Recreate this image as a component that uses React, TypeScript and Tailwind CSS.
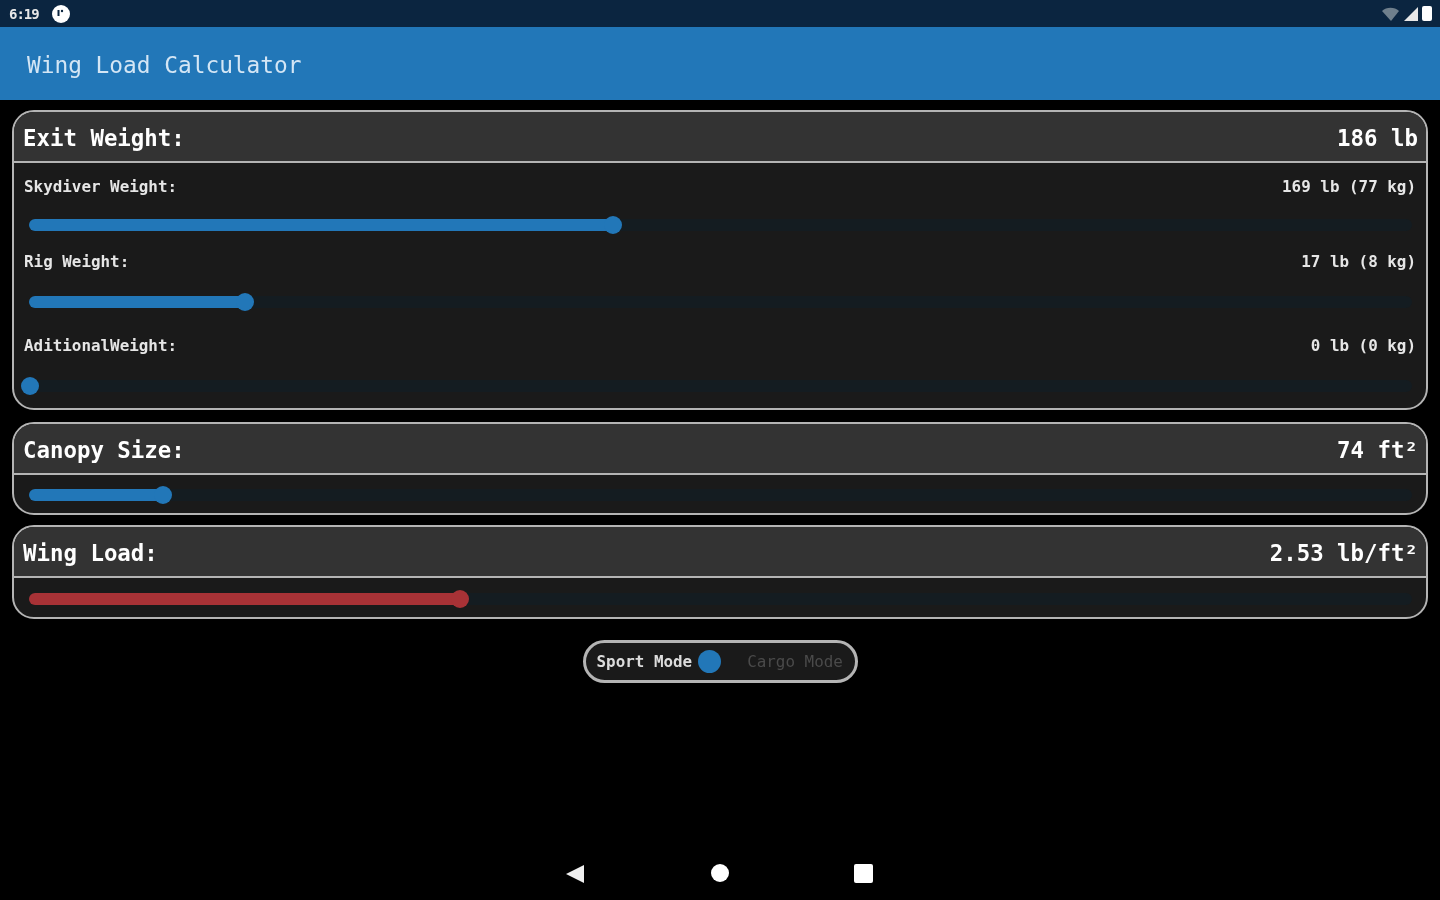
const mono = "font-['DejaVu_Sans_Mono',monospace]";

function Slider({ fill, thumb, color, className }: { fill: string; thumb: string; color: string; className: string }) {
  return (
    <div className={`relative ml-[15px] mr-[14px] h-[12px] rounded-full bg-[#141c21] ${className}`}>
      <div className={`h-full rounded-full ${fill} ${color}`} />
      <div className={`absolute top-[-3px] h-[18px] w-[18px] rounded-full ${thumb} ${color}`} />
    </div>
  );
}

function CardHeader({ title, value }: { title: string; value: string }) {
  return (
    <div className="flex h-[51px] items-center justify-between border-b-2 border-[#b4b4b4] bg-[#333333] pl-[9px] pr-[8px] pt-[4px] text-[22.4px] font-bold text-white">
      <span>{title}</span>
      <span>{value}</span>
    </div>
  );
}

function Row({ label, value, className }: { label: string; value: string; className: string }) {
  return (
    <div className={`flex items-center justify-between px-[10px] text-[15.9px] font-bold leading-[20px] text-[#e6e6e6] ${className}`}>
      <span>{label}</span>
      <span>{value}</span>
    </div>
  );
}

function Card({ children, className }: { children: React.ReactNode; className: string }) {
  return (
    <section className={`overflow-hidden rounded-[22px] border-2 border-[#b4b4b4] bg-[#1a1a1a] ${className}`}>
      {children}
    </section>
  );
}

export default function App() {
  return (
    <div className={`flex h-[900px] flex-col overflow-hidden bg-black blur-[0.5px] ${mono}`}>
      <div className="flex h-[27px] items-center justify-between bg-[#0b2540] pl-[9px] pr-[8px]">
        <div className="flex items-center gap-[13px]">
          <span className="pt-[2px] text-[14px] font-bold tracking-[-1px] text-[#e8e8e8]">6:19</span>
          <div className="flex h-[18px] w-[18px] items-center justify-center rounded-full bg-white">
            <svg width="14" height="14" viewBox="0 0 14 14">
              <rect x="3.5" y="3" width="2" height="6" fill="#0b2540" />
              <circle cx="8" cy="4" r="1.2" fill="#0b2540" />
            </svg>
          </div>
        </div>
        <div className="flex items-center gap-[4px]">
          <svg width="18" height="16" viewBox="0 0 18 16">
            <path d="M0 5a13 13 0 0 1 17 0l-8 10z" fill="#6f7f8c" />
          </svg>
          <svg width="14" height="14" viewBox="0 0 14 14">
            <path d="M14 0v14H0z" fill="#e8e8e8" />
          </svg>
          <div className="h-[15px] w-[10px] rounded-[2px] bg-white" />
        </div>
      </div>

      <header className="flex h-[73px] items-center bg-[#2277b8] pl-[27px] pt-[4px] text-[22.8px] text-[#d4e6f5]">
        Wing Load Calculator
      </header>

      <main className="flex flex-col gap-[10px] px-[12px] pt-[10px]">
        <Card className="h-[300px]">
          <CardHeader title="Exit Weight:" value="186 lb" />
          <Row label="Skydiver Weight:" value="169 lb (77 kg)" className="mt-[14px]" />
          <Slider fill="w-[584px]" thumb="left-[575px]" color="bg-[#2277b8]" className="mt-[22px]" />
          <Row label="Rig Weight:" value="17 lb (8 kg)" className="mt-[21px]" />
          <Slider fill="w-[216px]" thumb="left-[207px]" color="bg-[#2277b8]" className="mt-[24px]" />
          <Row label="AditionalWeight:" value="0 lb (0 kg)" className="mt-[28px]" />
          <Slider fill="w-[0px]" thumb="left-[-8px]" color="bg-[#2277b8]" className="mt-[24px]" />
        </Card>

        <Card className="mt-[2px] h-[93px]">
          <CardHeader title="Canopy Size:" value="74 ft²" />
          <Slider fill="w-[134px]" thumb="left-[125px]" color="bg-[#2277b8]" className="mt-[14px]" />
        </Card>

        <Card className="h-[94px]">
          <CardHeader title="Wing Load:" value="2.53 lb/ft²" />
          <Slider fill="w-[431px]" thumb="left-[422px]" color="bg-[#a83236]" className="mt-[15px]" />
        </Card>
      </main>

      <div className="mt-[21px] flex justify-center">
        <div className="flex h-[43px] w-[275px] items-center rounded-full border-[3px] border-[#b4b4b4] bg-[#1a1a1a] pl-[11px] text-[15.9px] font-bold">
          <span className="text-[#dcdcdc]">Sport Mode</span>
          <div className="ml-[6px] h-[23px] w-[23px] rounded-full bg-[#2277b8]" />
          <span className="ml-[26px] font-normal text-[#4a4a4a]">Cargo Mode</span>
        </div>
      </div>

      <nav className="mt-auto flex h-[37px] items-start justify-center gap-[125px] pr-[1px] pt-[1px]">
        <svg width="20" height="20" viewBox="0 0 20 20">
          <path d="M0 10 18 1v18z" fill="#f0f0f0" />
        </svg>
        <div className="h-[18px] w-[18px] rounded-full bg-white" />
        <div className="h-[19px] w-[19px] rounded-[2px] bg-white" />
      </nav>
    </div>
  );
}
